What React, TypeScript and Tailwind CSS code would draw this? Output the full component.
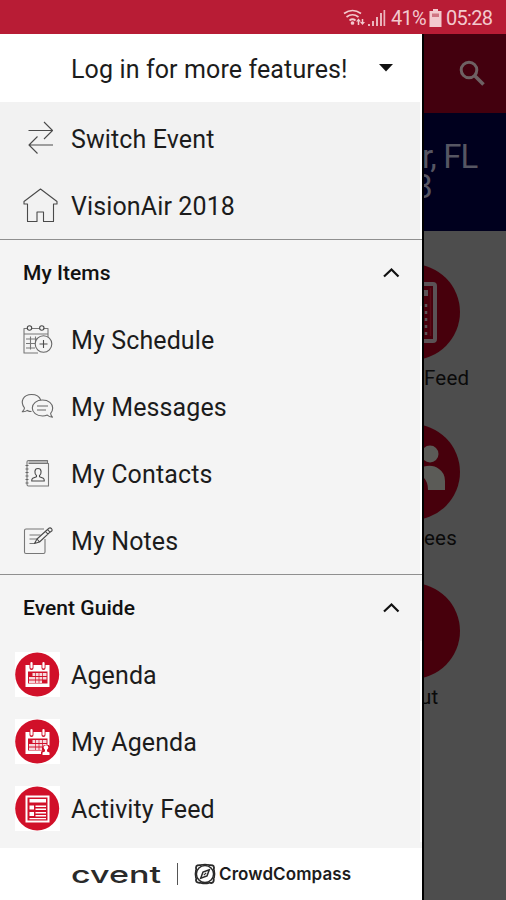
import type { ReactNode } from "react";

function LineIcon({ className = "", children }: { className?: string; children: ReactNode }) {
  return (
    <svg
      className={`h-9 w-9 overflow-visible ${className}`}
      viewBox="0 0 36 36"
      fill="none"
      stroke="#4a4a4a"
      strokeWidth="1.1"
      strokeLinejoin="round"
    >
      {children}
    </svg>
  );
}

function IconSwitch() {
  return (
    <LineIcon>
      <path d="M8.500 9.500h24M24 1l8.500 8.500-8.500 8.500" />
      <path d="M33 24H9M17.500 15.500L9 24l8.500 8.500" />
    </LineIcon>
  );
}

function IconHome() {
  return (
    <LineIcon>
      <path d="M20.500 1L4 13.500v2.500h3.500V33.500h9.500V24h6.500v9.500H33.500V16H37v-2.500z" />
    </LineIcon>
  );
}

function IconSchedule() {
  return (
    <LineIcon>
      <path
        d="M18 31H4V6.500h3.500M11.500 6.500h8M23.500 6.500h4.500V15M4 12h24M6 17h11M6 21.500h9M6 26h9M10.500 14.500v13M15.500 14.500v5"
        stroke="#777"
      />
      <circle cx="9.500" cy="6" r="2.200" />
      <circle cx="21.800" cy="6" r="2.200" />
      <circle cx="23.500" cy="22" r="8.300" fill="#f4f4f4" stroke="#666" />
      <path d="M23.500 18v8M19.500 22h8" />
    </LineIcon>
  );
}

function IconMessages() {
  return (
    <LineIcon>
      <path
        d="M11.500 22.500c-1.500 0-3-.4-4.200-1.100-1.300 1-3 1.500-5 1.300 1.300-1 2-2.300 2.200-3.700C-.5 12.500 3.500 5.500 11.500 5.500c4.500 0 8 2 9.200 5.500"
        stroke="#666"
      />
      <path
        d="M22.500 11c-6 0-10.200 3.500-10.200 8s4.200 8 10.200 8c1.800 0 3.400-.3 4.800-.9 1.300 1.300 3 2 5.200 2-1.200-1-1.800-2.400-1.900-3.800 1.500-1.500 2.100-3.300 2.100-5.300 0-4.500-4.200-8-10.200-8zM17 17h11M17 21h9"
        stroke="#666"
      />
    </LineIcon>
  );
}

function IconContacts() {
  return (
    <LineIcon>
      <path
        d="M8.500 4.500H27.500v3M8.500 7.500H28.500v22.500H8.500q-1.500 0-1.500-1.500V6q0-1.500 1.500-1.500M8.500 6H27.500"
        stroke="#777"
      />
      <path d="M5.500 9.500h3M5.500 13h3M5.500 16.500h3M5.500 20h3M5.500 23.500h3M5.500 27h3" stroke="#666" />
      <path d="M18 12.500c-4.200 0-3.500 5.500-1.500 7v1.200l-3.800 1.600q-1 .6-1 2.700h12.600q0-2.100-1-2.700l-3.800-1.600v-1.200c2-1.500 2.700-7-1.500-7z" />
    </LineIcon>
  );
}

function IconNotes() {
  return (
    <LineIcon>
      <path
        d="M24 6H6q-1.500 0-1.500 1.500V29q0 1.500 1.500 1.500h17.500q1.500 0 1.500-1.500V16M9.500 12h11M9.500 16h8M9.500 20.500h5"
        stroke="#777"
      />
      <path d="M14.500 20.500l2.500-4.500L27.500 6.500l2.500 2.700L19.500 19zM25.500 8.500l2.500 2.700M27.500 6.500L29.300 5q1.200-.5 2.200.6t.5 2.200L30 9.200M17 16l2.500 3" />
    </LineIcon>
  );
}

function Badge({ children }: { children: ReactNode }) {
  return (
    <div className="bg-white">
      <svg className="h-[45px] w-[45px]" viewBox="0 0 45 45">
        <circle cx="22.200" cy="22.500" r="22" fill="#d11029" />
        {children}
      </svg>
    </div>
  );
}

function CalendarShape() {
  return (
    <>
      <path d="M10.500 13h24v22h-24z" fill="#fff" />
      <path d="M13 19.500h19.500v12H13z" fill="#d11029" />
      <path d="M17.500 21h14v3h-14zM14 25h17.500v2.500H14zM14 28.500h13V31H14z" fill="#f6d8dc" />
      <path d="M20.500 20.500V31M24 20.500V31M27.500 20.500V31" stroke="#d11029" strokeWidth=".7" />
      <path d="M16.500 11v5M28.500 11v5" stroke="#d11029" strokeWidth="4" strokeLinecap="round" />
      <path d="M16.500 11v4.500M28.500 11v4.500" stroke="#fff" strokeWidth="2.200" strokeLinecap="round" />
    </>
  );
}

function IconAgenda() {
  return (
    <Badge>
      <CalendarShape />
    </Badge>
  );
}

function IconMyAgenda() {
  return (
    <Badge>
      <CalendarShape />
      <path d="M26 37v-4l2.500-3v-4h5.500l3 4v7z" fill="#d11029" />
      <circle cx="31" cy="28.500" r="2.300" fill="#fff" />
      <path d="M30 30h2v2.500l2.500 1V36h-7v-2.500l2.500-1z" fill="#fff" />
    </Badge>
  );
}

function IconFeed() {
  return (
    <Badge>
      <rect x="10.500" y="9.500" width="24" height="27" fill="#fff" />
      <rect x="12.500" y="11.500" width="20" height="23" fill="#d11029" />
      <path
        d="M14.500 13h16.500v3.500H14.500zM14.500 19.500H19v4h-4.500zM14.500 26H19v4h-4.500zM20.500 19.500H31v1.500H20.500zM20.500 22.500H31V24H20.500zM20.500 26H31v1.500H20.500zM20.500 29H31v1.500H20.500zM14.500 32h16.500v1.200H14.500z"
        fill="#fff"
      />
    </Badge>
  );
}

function IconCompass() {
  return (
    <svg className="h-[22px] w-[22px]" viewBox="0 0 22 22" fill="none" stroke="#2a2a2a">
      <path
        d="M7 1.800Q11 .8 15 1.800M20.200 7Q21.200 11 20.200 15M15 20.200Q11 21.200 7 20.200M1.800 15Q.8 11 1.800 7"
        strokeWidth="1.300"
      />
      <path
        d="M7.500 2.200Q2.200 1.500 2 4.500 2 6 2.500 7.500M14.500 2.200Q19.800 1.500 20 4.500 20 6 19.500 7.500M19.500 14.500Q20.500 19.500 17.500 20 16 20 14.500 19.500M7.500 19.500Q2.500 20.500 2 17.500 2 16 2.500 14.500"
        strokeWidth="1.800"
      />
      <circle cx="11" cy="11" r="8.600" strokeWidth="1.500" />
      <path d="M15.300 6.700l-2.300 6.300-6.300 2.300L9 9z" strokeWidth="1.500" />
      <path d="M9.800 12.200l2.400-2.400" strokeWidth="1.200" />
    </svg>
  );
}

function Chevron() {
  return (
    <svg className="h-3 w-[18px]" viewBox="0 0 18 12" fill="none" stroke="#111" strokeWidth="2.200">
      <path d="M2 9.500L9.500 2.500l7 7" />
    </svg>
  );
}

function MenuItem({ icon, label }: { icon: ReactNode; label: string }) {
  return (
    <li className="flex h-[67px] items-center">
      <div className="flex w-[71px] items-center pl-[15px]">
        <div className="flex w-[45px] justify-center">{icon}</div>
      </div>
      <span className="pt-[2px] text-[25px] tracking-[0.12px]">{label}</span>
    </li>
  );
}

function SectionHeader({ title }: { title: string }) {
  return (
    <div className="flex h-[67px] items-center justify-between border-t border-[#8f8f8f] pr-[22px] pl-[23px]">
      <h2 className="pt-[2px] text-[21px] font-medium tracking-[0.05px] text-[#111]">{title}</h2>
      <Chevron />
    </div>
  );
}

function StatusBar() {
  return (
    <header className="flex h-[34px] shrink-0 items-center justify-end bg-[#b81c35] pt-[2px] pr-[13px] text-[20px] tracking-[-0.7px] text-[#f3c9ce]">
      <svg className="mr-[3px] h-5 w-[22px]" viewBox="0 0 22 20" fill="none" stroke="#f3c9ce" strokeWidth="1.700">
        <path d="M1 5.500q8.500-6 17 0M3.500 9q6-4.500 12 0M6.500 12.500q3-2.500 6 0" />
        <circle cx="9.500" cy="15" r="1" fill="#f3c9ce" />
        <path d="M15.500 17v-5M19.500 11v4" strokeWidth="1.500" />
        <path d="M13 13.500l2.500-3 2.500 3zM17 14l2.500 3 2.500-3z" fill="#f3c9ce" stroke="none" />
      </svg>
      <svg className="h-[18px] w-[18px]" viewBox="0 0 18 18" fill="#eab4bc">
        <path d="M0 15h2v2H0zM4 12h2v5H4zM8 8h2v9H8zM12 4h2v13h-2zM15.500 1h1.700v16h-1.700z" />
      </svg>
      <span className="ml-[5px] w-[34px]">41%</span>
      <svg className="ml-[4px] h-[18px] w-[13px]" viewBox="0 0 13 18" fill="#f3c9ce">
        <path d="M4 0h5v2h3.500v16H.500V2H4z" />
        <path d="M3 4.500h7V8H3z" fill="#cf7482" />
      </svg>
      <span className="ml-[4px] w-[47px]">05:28</span>
    </header>
  );
}

function Drawer() {
  return (
    <aside className="flex w-[424px] shrink-0 flex-col border-r-2 border-black bg-[#f4f4f4] text-[#1c1c1c]">
      <div className="flex h-[68px] shrink-0 items-center justify-between bg-white pr-[29px] pl-[71px]">
        <span className="pt-[3px] text-[25px] tracking-[0.12px] whitespace-nowrap">
          Log in for more features!
        </span>
        <svg className="h-2 w-[14px]" viewBox="0 0 14 8">
          <path d="M0 0h14L7 7.500z" fill="#111" />
        </svg>
      </div>
      <nav className="min-h-0 flex-1">
        <ul className="h-[137px] border-r-2 border-white bg-[#f2f2f2] pt-[3px]">
          <MenuItem icon={<IconSwitch />} label="Switch Event" />
          <MenuItem icon={<IconHome />} label="VisionAir 2018" />
        </ul>
        <SectionHeader title="My Items" />
        <ul className="border-r-2 border-white">
          <MenuItem icon={<IconSchedule />} label="My Schedule" />
          <MenuItem icon={<IconMessages />} label="My Messages" />
          <MenuItem icon={<IconContacts />} label="My Contacts" />
          <MenuItem icon={<IconNotes />} label="My Notes" />
        </ul>
        <SectionHeader title="Event Guide" />
        <ul className="border-r-2 border-white">
          <MenuItem icon={<IconAgenda />} label="Agenda" />
          <MenuItem icon={<IconMyAgenda />} label="My Agenda" />
          <MenuItem icon={<IconFeed />} label="Activity Feed" />
        </ul>
      </nav>
      <footer className="flex h-[52px] shrink-0 items-center bg-white pl-[71px] text-[#1c1c1c]">
        <svg className="h-[34px] w-[91px]" viewBox="0 0 91 34">
          <text
            x="0"
            y="26"
            textLength="90"
            lengthAdjust="spacingAndGlyphs"
            fontFamily="Inter"
            fontWeight="500"
            fontSize="24"
            fill="#2a2a2a"
          >
            cvent
          </text>
        </svg>
        <div className="ml-[15px] h-[22px] w-px bg-[#555]" />
        <div className="ml-[16px]">
          <IconCompass />
        </div>
        <span className="ml-[3px] pt-px font-[Inter] text-[17px] font-semibold tracking-[0.1px]">
          CrowdCompass
        </span>
      </footer>
    </aside>
  );
}

function Tile({ label, shift = "", children }: { label: string; shift?: string; children?: ReactNode }) {
  return (
    <div className="h-[159.500px]">
      <svg className="h-[97px] w-[82px]" viewBox="0 0 82 97">
        <circle cx="-12" cy="48" r="48" fill="#47000c" />
        {children}
      </svg>
      <p className={`mt-[5px] text-[20.500px] leading-[24px] tracking-[0.2px] text-[#0a0a0a] ${shift}`}>
        {label}
      </p>
    </div>
  );
}

function DimmedPage() {
  return (
    <main className="flex flex-1 flex-col overflow-hidden bg-[#4d4d4d]">
      <div className="flex h-[79px] shrink-0 items-center justify-end bg-[#43000e] pr-[21px] pb-[2px]">
        <svg className="h-[26px] w-[26px]" viewBox="0 0 26 26" fill="none" stroke="#6e6163" strokeWidth="3">
          <circle cx="10" cy="10" r="7.800" />
          <path d="M15.500 15.500l9 9" strokeWidth="3.500" />
        </svg>
      </div>
      <div className="h-[118px] shrink-0 bg-[#00001e] pt-[29px] text-[33px] leading-[30px] tracking-[-0.900px] whitespace-nowrap text-[#565663]">
        <p className="-ml-[2px]">r, FL</p>
        <p className="-ml-[10px]">8</p>
      </div>
      <div className="pt-[33px]">
        <Tile label="Feed">
          <path d="M-5 20H9q2 0 2 2v53q0 2-2 2H-5" fill="none" stroke="#5b5255" strokeWidth="4" />
          <path d="M0 26h4v6H0z" fill="#5b5255" />
          <path d="M2 40v32" stroke="#5b5255" strokeWidth="2.500" strokeDasharray="3 4" />
          <path d="M6.500 24v48" stroke="#5b0a16" strokeWidth="1.500" />
        </Tile>
        <Tile label="ees">
          <circle cx="6" cy="30" r="8.500" fill="#5b5b57" />
          <path d="M-8 46Q6 38 15 45 21 49 21 57v9H4q0-8-4-12z" fill="#5b5b57" />
        </Tile>
        <Tile label="ut" shift="-ml-[4px]" />
      </div>
    </main>
  );
}

export default function App() {
  return (
    <div className="flex h-[900px] w-[506px] flex-col overflow-hidden bg-white font-[Roboto]">
      <StatusBar />
      <div className="flex min-h-0 flex-1">
        <Drawer />
        <DimmedPage />
      </div>
    </div>
  );
}
